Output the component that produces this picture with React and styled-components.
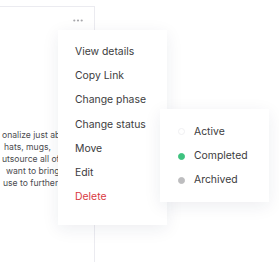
import React from "react";
import styled, { createGlobalStyle } from "styled-components";

const GlobalStyle = createGlobalStyle`
    body {
        margin: 0;
        background: #fff;
        font-family: Inter, "Noto Sans", sans-serif;
    }
`;

const actions = ["View details", "Copy Link", "Change phase", "Change status", "Move", "Edit", "Delete"];

const statuses = [
    { label: "Active", fill: "#fff", ring: "#f0f0f2" },
    { label: "Completed", fill: "#3ec27f", ring: "#3ec27f" },
    { label: "Archived", fill: "#bdbdbf", ring: "#bdbdbf" },
];

const lines = [
    { text: "onalize just about", indent: 1 },
    { text: "hats, mugs,", indent: 3 },
    { text: "utsource all of", indent: 1 },
    { text: "want to bring", indent: 5 },
    { text: "use to further", indent: 2 },
];

const App = () => {
    return (
        <>
            <GlobalStyle />
            <StPage>
                <StCard>
                    <StCardHeader>
                        <svg width="10" height="3" viewBox="0 0 10 3">
                            <circle cx="1.3" cy="1.5" r="1.1" fill="#a8a8ac" />
                            <circle cx="5" cy="1.5" r="1.1" fill="#a8a8ac" />
                            <circle cx="8.7" cy="1.5" r="1.1" fill="#a8a8ac" />
                        </svg>
                    </StCardHeader>
                    <StCardText>
                        {lines.map((l) => (
                            <StLine key={l.text} $indent={l.indent}>{l.text}</StLine>
                        ))}
                    </StCardText>
                </StCard>

                <StMenu>
                    {actions.map((a) => (
                        <StMenuItem key={a} $danger={a === "Delete"}>
                            {a}
                            {a === "Change status" && (
                                <StSubMenu>
                                    {statuses.map((s) => (
                                        <StSubItem key={s.label}>
                                            <StDot $fill={s.fill} $ring={s.ring} />
                                            {s.label}
                                        </StSubItem>
                                    ))}
                                </StSubMenu>
                            )}
                        </StMenuItem>
                    ))}
                </StMenu>
            </StPage>
        </>
    );
};

export default App;

const StPage = styled.div`
    position: relative;
    width: 279px;
    height: 262px;
    overflow: hidden;
    background: #fff;
`;

const StCard = styled.div`
    margin-top: 6px;
    margin-left: -60px;
    width: 155px;
    height: 300px;
    border: 1px solid #ebebf0;
    box-sizing: border-box;
    display: flex;
    flex-direction: column;
    overflow: hidden;
`;

const StCardHeader = styled.div`
    display: flex;
    justify-content: flex-end;
    padding: 12px 11px 0 0;
    height: 10px;
`;

const StCardText = styled.div`
    margin-top: 100px;
    padding-left: 60px;
    display: flex;
    flex-direction: column;
`;

const StLine = styled.div`
    font-size: 8.6px;
    line-height: 12px;
    color: #4c4c50;
    white-space: nowrap;
    padding-left: ${({ $indent }) => $indent}px;
`;

const StMenu = styled.div`
    position: absolute;
    left: 58px;
    top: 30px;
    width: 109px;
    padding: 10px 0 16px;
    background: #fff;
    box-shadow: 0 4px 16px rgba(30, 40, 80, 0.08);
    display: flex;
    flex-direction: column;
`;

const StMenuItem = styled.div`
    position: relative;
    padding-left: 17px;
    font-size: 10.4px;
    line-height: 24.2px;
    color: ${({ $danger }) => ($danger ? "#d9393f" : "#3c3c40")};
    white-space: nowrap;
`;

const StSubMenu = styled.div`
    position: absolute;
    left: 102px;
    top: -4px;
    width: 109px;
    padding: 11px 0 9px;
    background: #fff;
    box-shadow: 0 4px 16px rgba(30, 40, 80, 0.08);
    display: flex;
    flex-direction: column;
`;

const StSubItem = styled.div`
    display: flex;
    align-items: center;
    gap: 9px;
    padding-left: 18px;
    font-size: 10.4px;
    line-height: 24.3px;
    color: #3c3c40;
`;

const StDot = styled.span`
    width: 7px;
    height: 7px;
    border-radius: 50%;
    box-sizing: border-box;
    background: ${({ $fill }) => $fill};
    border: 1px solid ${({ $ring }) => $ring};
`;
